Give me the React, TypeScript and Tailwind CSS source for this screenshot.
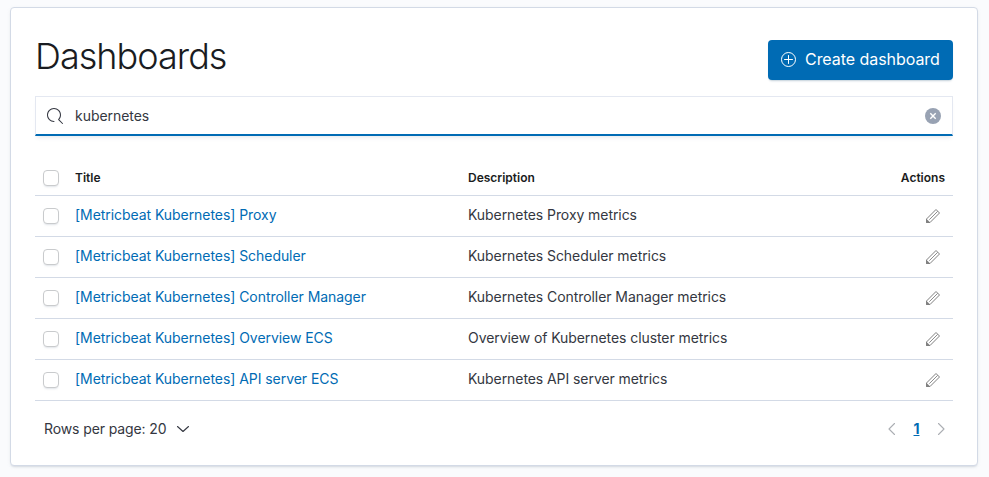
import React from "react";

const rows = [
  { title: "[Metricbeat Kubernetes] Proxy", description: "Kubernetes Proxy metrics" },
  { title: "[Metricbeat Kubernetes] Scheduler", description: "Kubernetes Scheduler metrics" },
  { title: "[Metricbeat Kubernetes] Controller Manager", description: "Kubernetes Controller Manager metrics" },
  { title: "[Metricbeat Kubernetes] Overview ECS", description: "Overview of Kubernetes cluster metrics" },
  { title: "[Metricbeat Kubernetes] API server ECS", description: "Kubernetes API server metrics" },
];

function SearchIcon() {
  return (
    <svg width="16" height="16" viewBox="0 0 16 16" fill="#343741">
      <path d="M11.271 11.978l3.872 3.873a.502.502 0 00.708 0 .502.502 0 000-.708l-3.565-3.564c2.38-2.747 2.267-6.923-.342-9.532-2.73-2.73-7.17-2.73-9.898 0-2.728 2.729-2.728 7.17 0 9.9a6.955 6.955 0 004.949 2.05.5.5 0 000-1 5.96 5.96 0 01-4.242-1.757 6.01 6.01 0 010-8.486 6.004 6.004 0 018.484 0 6.01 6.01 0 010 8.486.5.5 0 00.034.738z" />
    </svg>
  );
}

function PlusInCircleIcon() {
  return (
    <svg width="16" height="16" viewBox="0 0 16 16" fill="none" stroke="#fff">
      <circle cx="8.5" cy="7.5" r="7" />
      <path d="M8.5 3.5v8M4.5 7.5h8" strokeLinecap="round" />
    </svg>
  );
}

function PencilIcon() {
  return (
    <svg width="16" height="16" viewBox="0 0 16 16" fill="none" stroke="#808080" strokeLinejoin="round">
      <path d="M11 1.5L1.5 11v3.5H5L14.5 5z" />
      <path d="M4.3 11.7l8.4-8.4" strokeWidth="0.9" />
      <path d="M1.5 11.3v3.2h3.2z" fill="#808080" />
    </svg>
  );
}

function Chevron({ d, className }: { d: string; className: string }) {
  return (
    <svg className={className} width="16" height="16" viewBox="0 0 16 16" fill="none" stroke="currentColor" strokeWidth="1.1" strokeLinecap="round" strokeLinejoin="round">
      <path d={d} />
    </svg>
  );
}

function Checkbox() {
  return (
    <span
      role="checkbox"
      aria-checked="false"
      className="block size-4 rounded border border-[#c9cbcd] bg-white shadow-[0_2px_2px_-1px_rgba(152,162,179,0.3)]"
    />
  );
}

export default function App() {
  return (
    <div className="h-[477px] bg-[#fafbfd] pt-[7px] pl-2.5 font-['Inter',sans-serif] text-sm tracking-[-0.005em] text-[#343741]">
      <main className="h-[459px] w-[968px] rounded border border-[#d3dae6] bg-white px-6 pt-8 shadow-[0_2px_2px_-1px_rgba(152,162,179,0.3),0_1px_5px_-2px_rgba(152,162,179,0.3)]">
        <header className="flex h-10 justify-between">
          <h1 className="-mt-1 text-[36px] leading-10 font-light tracking-[-0.027em] text-[#1a1c21]">Dashboards</h1>
          <button className="flex h-10 w-[185px] items-center gap-[9px] rounded bg-[#006bb4] pl-3 text-base text-white shadow-[0_2px_2px_-1px_rgba(54,97,126,0.3)]">
            <PlusInCircleIcon />
            <span className="pb-0.5 tracking-[-0.003em]">Create dashboard</span>
          </button>
        </header>

        <div className="mt-4 flex h-10 items-center border border-b-2 border-[#e4e8f1] border-b-[#006bb4] px-[11px] shadow-[0_4px_4px_-2px_rgba(152,162,179,0.2)]">
          <SearchIcon />
          <span className="ml-3 flex-1 tracking-[-0.003em]">kubernetes</span>
          <svg width="16" height="16" viewBox="0 0 16 16">
            <circle cx="8" cy="8" r="8" fill="#98a2b3" />
            <path d="M5.3 5.3l5.4 5.4M10.7 5.3l-5.4 5.4" stroke="#fff" strokeWidth="1.4" />
          </svg>
        </div>

        <section className="mt-6">
          <div className="grid h-9 grid-cols-[32px_393px_1fr_auto] items-center border-b border-[#d3dae6] text-xs font-semibold tracking-normal text-[#1a1c21]">
            <div className="pl-2"><Checkbox /></div>
            <div className="pl-2">Title</div>
            <div className="pl-2">Description</div>
            <div className="pr-2">Actions</div>
          </div>
          {rows.map((row) => (
            <div key={row.title} className="grid h-[41px] grid-cols-[32px_393px_1fr_auto] items-center border-b border-[#d3dae6] pb-0.5">
              <div className="pt-px pl-2"><Checkbox /></div>
              <a className="pl-2 tracking-[-0.004em] text-[#006bb4]">{row.title}</a>
              <div className="pl-2">{row.description}</div>
              <div className="pt-px pr-3"><PencilIcon /></div>
            </div>
          ))}
        </section>

        <footer className="mt-4 flex h-6 items-center justify-between pr-1 pl-[9px]">
          <div className="flex items-center gap-2">
            <span className="w-[123px] tracking-[-0.008em]">Rows per page: 20</span>
            <Chevron className="text-[#343741]" d="M2.5 5.5L8 10.5l5.5-5" />
          </div>
          <div className="flex items-center">
            <Chevron className="text-[#abaeb3]" d="M10.5 2.5L5 8l5.5 5.5" />
            <span className="w-[33px] text-center font-bold text-[#006bb4] underline">1</span>
            <Chevron className="text-[#abaeb3]" d="M5.5 2.5L11 8l-5.5 5.5" />
          </div>
        </footer>
      </main>
    </div>
  );
}
